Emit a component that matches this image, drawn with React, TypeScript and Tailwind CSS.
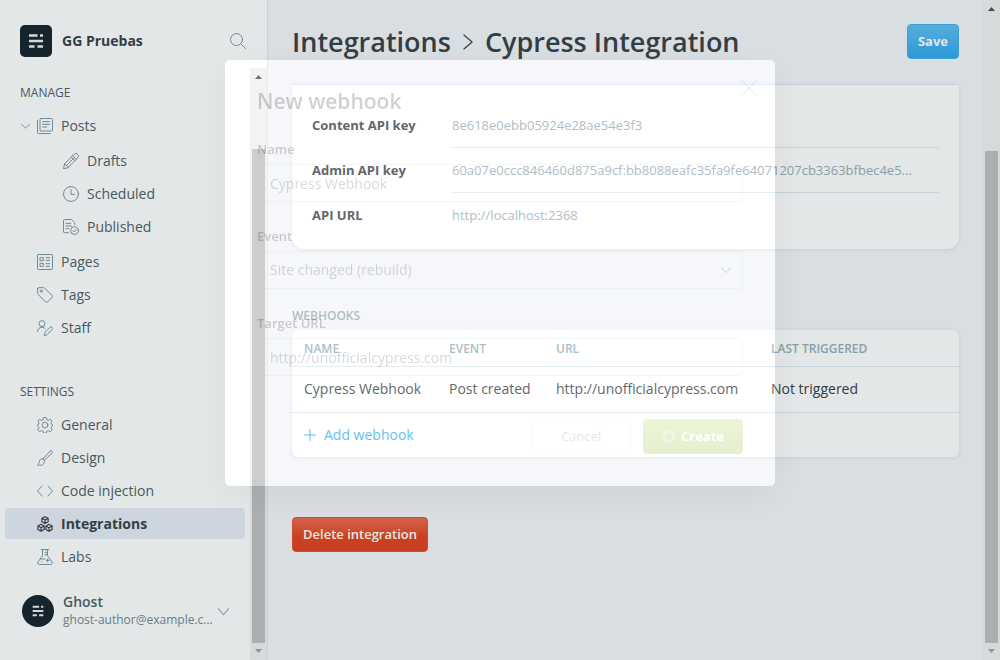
import { useState } from "react";
import type { ReactNode } from "react";

type IconProps = { children: ReactNode; className?: string; strokeWidth?: number };

function Icon({ children, className = "size-4 text-[#7c95a3]", strokeWidth = 1.4 }: IconProps) {
  return (
    <svg
      viewBox="0 0 24 24"
      className={`shrink-0 ${className}`}
      fill="none"
      stroke="currentColor"
      strokeWidth={strokeWidth}
      strokeLinecap="round"
      strokeLinejoin="round"
      aria-hidden="true"
    >
      {children}
    </svg>
  );
}

const icons: Record<string, ReactNode> = {
  posts: (
    <>
      <rect x="4.5" y=".75" width="18.75" height="18.75" rx="1.5" />
      <path d="M.75 4v17.75a1.5 1.5 0 0 0 1.5 1.5H20M8.5 5.5h10.5M8.5 9.5h10.5M8.5 13.5h6" />
    </>
  ),
  drafts: (
    <path d="M.8 23.2l1.7-7.1L16.6 2a3.8 3.8 0 0 1 5.4 5.4L7.9 21.5zM2.5 16.1l5.4 5.4M14.6 4l5.4 5.4M5.3 18.7L17.2 6.8M12.5 6.1l5.4 5.4" />
  ),
  scheduled: (
    <>
      <circle cx="12" cy="12" r="11.2" />
      <path d="M12 5.500v7h5" />
    </>
  ),
  published: (
    <>
      <path d="M8.5 20.5H2.2A1.5 1.5 0 0 1 .75 19V2.2A1.5 1.5 0 0 1 2.2.75h10.6l4.7 4.7V8M4.5 6.5h7M4.5 10.5h8M4.5 14.5h4" />
      <circle cx="17.3" cy="17.3" r="5.9" />
      <path d="M14.7 17.5l1.8 1.9 3.4-4" />
    </>
  ),
  pages: (
    <>
      <rect x=".75" y=".75" width="22.5" height="22.5" rx="1.2" />
      <path d="M5 5.5h4.5V10H5zM5 14h4.5v4.5H5zM13.5 5.5H19M13.5 9.5H19M13.5 14.5H19M13.5 18.5H19" />
    </>
  ),
  tags: (
    <>
      <path d="M1 2.3V9.600a2 2 0 0 0 .6 1.400l11.300 11.500a2 2 0 0 0 2.800 0l7-7a2 2 0 0 0 0-2.800L11.200 1.600A2 2 0 0 0 9.800 1H2.300A1.300 1.300 0 0 0 1 2.300z" />
      <circle cx="6.500" cy="6.300" r="1.600" />
    </>
  ),
  staff: (
    <path d="M7.500 10a4.500 4.500 0 1 0 0-9 4.500 4.500 0 0 0 0 9zM.75 17.500c0-4 3-6.500 6.700-6.500 2 0 3.800.8 5 2M11 23l1-4.500 7.500-7.500a2.300 2.300 0 0 1 3.300 3.300l-7.500 7.500z" />
  ),
  general: (
    <>
      <circle cx="12" cy="12" r="4.300" />
      <path d="M10 .9h4l.7 3.200 2.500 1 2.800-1.700 2.700 2.700-1.700 2.800 1 2.500 1.300.3v1.600l-1.300 1-1 2.300 1.700 2.800-2.700 2.800-2.800-1.800-2.500 1-.7 2.700h-4l-.7-2.700-2.500-1L4 22.200l-2.700-2.800L3 16.600l-1-2.300-1.300-1v-1.600l1.300-.3 1-2.500L1.300 6.100 4 3.400l2.800 1.700 2.500-1z" />
    </>
  ),
  design: (
    <path d="M9 13.500L19.500 1.800a2.100 2.100 0 0 1 3 3L11 15.500M9 13.500l2 2M9 13.500c-2.500-.8-5 .5-5.300 3.200-.2 2.300-1.200 4.200-2.900 5.800 3.500 1 7.500.7 9.200-1.700 1.200-1.700 1.300-3.500 1-5.300" />
  ),
  code: <path d="M7.500 4.500L.75 12l6.750 7.500M16.500 4.500l6.750 7.500-6.750 7.500" />,
  integrations: (
    <path d="M12 1l4.700 2.500v5.200L12 11.200 7.300 8.700V3.500zM7.500 3.600L12 6l4.500-2.400M12 6v5M6 12.500l4.700 2.500v5.200L6 22.700l-4.700-2.500V15zM1.500 15.100L6 17.500l4.500-2.400M6 17.500v5M18 12.500l4.700 2.500v5.200L18 22.700l-4.700-2.500V15zM13.500 15.100l4.500 2.400 4.500-2.400M18 17.500v5" />
  ),
  labs: (
    <path d="M6.500.8h11M8.300.8V10L1.500 19.500c-1.200 2 0 3.700 2 3.700h17c2 0 3.200-1.700 2-3.700L15.700 10V.8M4.800 15H12M12 5h3.500M12 8.500h3.500M16 15v4M14 17h4M7 19v.1" />
  ),
};

function Logo({ className, viewBox = "0 0 32 32" }: { className: string; viewBox?: string }) {
  return (
    <svg viewBox={viewBox} className={`bg-[#19252f] ${className}`} aria-hidden="true">
      <path
        fill="#fff"
        fillOpacity=".92"
        d="M9 9.200h8.500v2.600H9zM20 9.200h3v2.600h-3zM9 14.700h14v2.600H9zM9 20.200h5.500v2.600H9zM17.500 20.200H23v2.600h-5.500z"
      />
    </svg>
  );
}

function ScrollRail({ thumb }: { thumb: string }) {
  return (
    <div className="flex w-[17px] shrink-0 flex-col items-center bg-[#f1f1f1]" aria-hidden="true">
      <svg viewBox="0 0 17 17" className="size-[17px] shrink-0">
        <path d="M5 11h7L8.500 7z" fill="#505050" />
      </svg>
      <div className={`w-[13px] flex-1 bg-[#c1c1c1] ${thumb}`} />
      <svg viewBox="0 0 17 17" className="size-[17px] shrink-0">
        <path d="M5 6h7L8.500 10z" fill="#a3a3a3" />
      </svg>
    </div>
  );
}

type NavEntry = { icon: string; label: string; nested?: boolean; active?: boolean; open?: boolean };

const manage: NavEntry[][] = [
  [{ icon: "posts", label: "Posts", open: true }],
  [
    { icon: "drafts", label: "Drafts", nested: true },
    { icon: "scheduled", label: "Scheduled", nested: true },
    { icon: "published", label: "Published", nested: true },
  ],
  [
    { icon: "pages", label: "Pages" },
    { icon: "tags", label: "Tags" },
    { icon: "staff", label: "Staff" },
  ],
];

const settings: NavEntry[] = [
  { icon: "general", label: "General" },
  { icon: "design", label: "Design" },
  { icon: "code", label: "Code injection" },
  { icon: "integrations", label: "Integrations", active: true },
  { icon: "labs", label: "Labs" },
];

function NavLinks({ items }: { items: NavEntry[] }) {
  return (
    <ul className="flex flex-col gap-0.5">
      {items.map(({ icon, label, nested, active, open }) => (
        <li key={label}>
          <a
            href="#"
            className={`flex h-[31px] items-center gap-2 rounded ${nested ? "pl-[58px]" : "pl-4"} ${
              active ? "bg-[#e7ebf5] font-bold text-[#3a4248]" : ""
            }`}
          >
            {!nested && (
              <span className="flex w-2 shrink-0 items-center">
                {open && (
                  <Icon className="h-4 w-[9px] text-[#8fa3ae]" strokeWidth={2.6}>
                    <path d="M0 6l12 12L24 6" />
                  </Icon>
                )}
              </span>
            )}
            <Icon
              className={active ? "size-4 text-[#3a4248]" : "size-4 text-[#7590a0]"}
              strokeWidth={active ? 1.8 : 1.4}
            >
              {icons[icon]}
            </Icon>
            {label}
          </a>
        </li>
      ))}
    </ul>
  );
}

function Sidebar() {
  return (
    <aside className="flex w-[268px] shrink-0 flex-col border-r border-[#e3e6ee] bg-white text-sm text-[#525f66]">
      <header className="flex h-[68px] shrink-0 items-end gap-2.5 pb-[11px] pl-5 pr-[21px]">
        <Logo className="size-8 rounded-[5px]" />
        <strong className="flex h-8 flex-1 items-center text-[#3a4248]">GG Pruebas</strong>
        <button type="button" aria-label="Search" className="flex h-8 items-center">
          <Icon className="size-4 text-[#7590a0]">
            <circle cx="9.800" cy="9.800" r="9" />
            <path d="M16.300 16.300l7 7" />
          </Icon>
        </button>
      </header>
      <div className="flex min-h-0 flex-1">
        <div className="flex min-w-0 flex-1 flex-col px-[5px] pt-[17px]">
          <nav>
            <h2 className="mb-[9px] pl-[15px] text-xs leading-4">MANAGE</h2>
            <div className="flex flex-col gap-1">
              {manage.map((items) => (
                <NavLinks key={items[0].label} items={items} />
              ))}
            </div>
            <h2 className="mb-[9px] mt-[41px] pl-[15px] text-xs leading-4">SETTINGS</h2>
            <NavLinks items={settings} />
          </nav>
          <div className="mt-[21px] flex items-center pl-[17px]">
            <Logo className="size-8 shrink-0 rounded-full" viewBox="-5 -5 42 42" />
            <div className="ml-[9px] w-[155px] leading-[18px]">
              <div className="font-semibold">Ghost</div>
              <div className="truncate text-xs leading-[18px] text-[#738a94]">ghost-author@example.com</div>
            </div>
            <button type="button" aria-label="User menu">
              <Icon className="size-[11px] text-[#8fa3ae]" strokeWidth={2.2}>
                <path d="M0 5l12 14L24 5" />
              </Icon>
            </button>
          </div>
        </div>
        <ScrollRail thumb="mt-16" />
      </div>
    </aside>
  );
}

const keys = [
  { label: "Content API key", value: "8e618e0ebb05924e28ae54e3f3" },
  { label: "Admin API key", value: "60a07e0ccc846460d875a9cf:bb8088eafc35fa9fe64071207cb3363bfbec4e5..." },
  { label: "API URL", value: "http://localhost:2368" },
];

function Content() {
  return (
    <main className="min-w-0 flex-1 bg-[#f4f5fa] px-6 text-sm text-[#3a4248]">
      <header className="flex h-[84px] items-center justify-between pb-px">
        <h1 className="flex items-center gap-2.5 whitespace-nowrap text-[27px] font-semibold leading-9">
          <a href="#">Integrations</a>
          <Icon className="h-5 w-3.5 text-[#3a4248]" strokeWidth={2}>
            <path d="M5 0l14 12L5 24" />
          </Icon>
          Cypress Integration
        </h1>
        <button
          type="button"
          className="h-[35px] rounded border border-[#41b0ef] bg-linear-to-b from-[#60bff2] to-[#31a7ee] px-2.5 text-[13px] font-bold text-white"
        >
          Save
        </button>
      </header>

      <dl className="h-[165px] rounded-b-xl border-t border-[#dbe8f2] bg-white px-5 pt-[18px] shadow-[0_1px_4px_rgba(0,0,0,0.08)]">
        {keys.map(({ label, value }) => (
          <div key={label} className="group flex">
            <dt className="w-[140px] shrink-0 pt-3 text-[13px] font-bold leading-5">{label}</dt>
            <dd className="h-[45px] min-w-0 flex-1 truncate border-b border-[#dbe8f2] pt-3 text-[13px] leading-5 text-[#9baeb8] group-last:border-0">
              {value}
            </dd>
          </div>
        ))}
      </dl>

      <h2 className="mb-1.5 mt-[59px] text-xs font-semibold leading-4 text-[#9baeb8]">WEBHOOKS</h2>
      <div className="rounded-md bg-white shadow-[0_1px_4px_rgba(0,0,0,0.08)]">
        <table className="w-full table-fixed text-left">
          <colgroup>
            <col className="w-[145px]" />
            <col className="w-[107px]" />
            <col className="w-[215px]" />
            <col />
          </colgroup>
          <thead>
            <tr className="h-9 border-b border-[#dbe8f2] text-xs text-[#9baeb8]">
              {["NAME", "EVENT", "URL", "LAST TRIGGERED"].map((heading) => (
                <th key={heading} className="pl-3 pt-0.5 font-semibold">
                  {heading}
                </th>
              ))}
            </tr>
          </thead>
          <tbody>
            <tr className="h-[46px] whitespace-nowrap border-b border-[#dbe8f2]">
              <td className="pl-3">Cypress Webhook</td>
              <td className="pl-3">Post created</td>
              <td className="pl-3">http://unofficialcypress.com</td>
              <td className="pl-3">Not triggered</td>
            </tr>
          </tbody>
        </table>
        <button type="button" className="flex h-11 items-center gap-2 pl-3 text-[#3eb0ef]">
          <Icon className="size-3" strokeWidth={2.2}>
            <path d="M12 1v22M1 12h22" />
          </Icon>
          Add webhook
        </button>
      </div>

      <button
        type="button"
        className="mt-[60px] h-[35px] rounded border border-[#e4512f] bg-linear-to-b from-[#f06a4e] to-[#e1441f] to-60% px-2.5 text-[13px] font-semibold text-white"
      >
        Delete integration
      </button>
    </main>
  );
}

const fieldClass = "h-[38px] w-full rounded border border-[#c8d3db] bg-transparent px-3 text-sm text-[#3a4248] outline-none";

function WebhookDialog() {
  const [name, setName] = useState("Cypress Webhook");
  const [target, setTarget] = useState("http://unofficialcypress.com");
  return (
    <div className="fixed inset-0 z-10 flex items-start justify-center overflow-hidden pt-[60px]">
      <div
        role="dialog"
        aria-labelledby="dialog-title"
        className="w-[550px] rounded-[5px] bg-white/20 px-8 pb-8 pt-[26px] shadow-[0_0_0_9999px_rgba(0,36,36,0.11),0_10px_40px_rgba(0,20,20,0.06)]"
      >
        <form className="text-sm text-[#15171a] opacity-20" onSubmit={(event) => event.preventDefault()}>
          <div className="flex items-start justify-between">
            <h2 id="dialog-title" className="mb-[23px] text-[21px] font-semibold leading-[30px]">
              New webhook
            </h2>
            <button type="button" aria-label="Close" className="-mr-3.5 -mt-1.5 p-0">
              <Icon className="size-4 text-[#738a94]">
                <path d="M0 0l24 24M24 0L0 24" />
              </Icon>
            </button>
          </div>
          <div className="flex flex-col gap-6">
            <div>
              <label htmlFor="name" className="mb-[5px] block text-[13px] font-semibold leading-5">
                Name
              </label>
              <input id="name" className={fieldClass} value={name} onChange={(event) => setName(event.target.value)} />
            </div>
            <div>
              <label htmlFor="event" className="mb-[5px] block text-[13px] font-semibold leading-5">
                Event
              </label>
              <div className="relative">
                <select id="event" className={`appearance-none ${fieldClass}`}>
                  <option>Site changed (rebuild)</option>
                </select>
                <Icon className="pointer-events-none absolute right-3 top-3.5 size-2.5 text-[#738a94]" strokeWidth={2.8}>
                  <path d="M0 6l12 12L24 6" />
                </Icon>
              </div>
            </div>
            <div>
              <label htmlFor="target" className="mb-[5px] block text-[13px] font-semibold leading-5">
                Target URL
              </label>
              <input
                id="target"
                className={fieldClass}
                value={target}
                onChange={(event) => setTarget(event.target.value)}
              />
            </div>
          </div>
          <div className="mt-[43px] flex justify-end gap-3 text-[13px]">
            <button type="button" className="h-[35px] w-[100px] rounded border border-[#dde4e9] bg-white text-[#738a94]">
              Cancel
            </button>
            <button
              type="submit"
              className="flex h-[35px] w-[100px] items-center justify-center gap-1.5 rounded bg-linear-to-b from-[#9fcc2e] to-[#7fae12] font-bold text-white"
            >
              <Icon className="size-[13px]" strokeWidth={1.8}>
                <path d="M12 1v4M12 19v4M1 12h4M19 12h4M6.500 2.500l2 3.400M15.500 18.100l2 3.400M2.500 6.500l3.400 2M18.100 15.500l3.400 2M2.500 17.500l3.400-2M18.100 8.500l3.400-2M6.500 21.500l2-3.400M15.500 5.900l2-3.400" />
              </Icon>
              Create
            </button>
          </div>
        </form>
      </div>
    </div>
  );
}

export default function App() {
  return (
    <div className="flex h-screen overflow-hidden font-['Open_Sans','Noto_Sans',sans-serif]">
      <Sidebar />
      <Content />
      <ScrollRail thumb="mt-[134px]" />
      <WebhookDialog />
    </div>
  );
}
